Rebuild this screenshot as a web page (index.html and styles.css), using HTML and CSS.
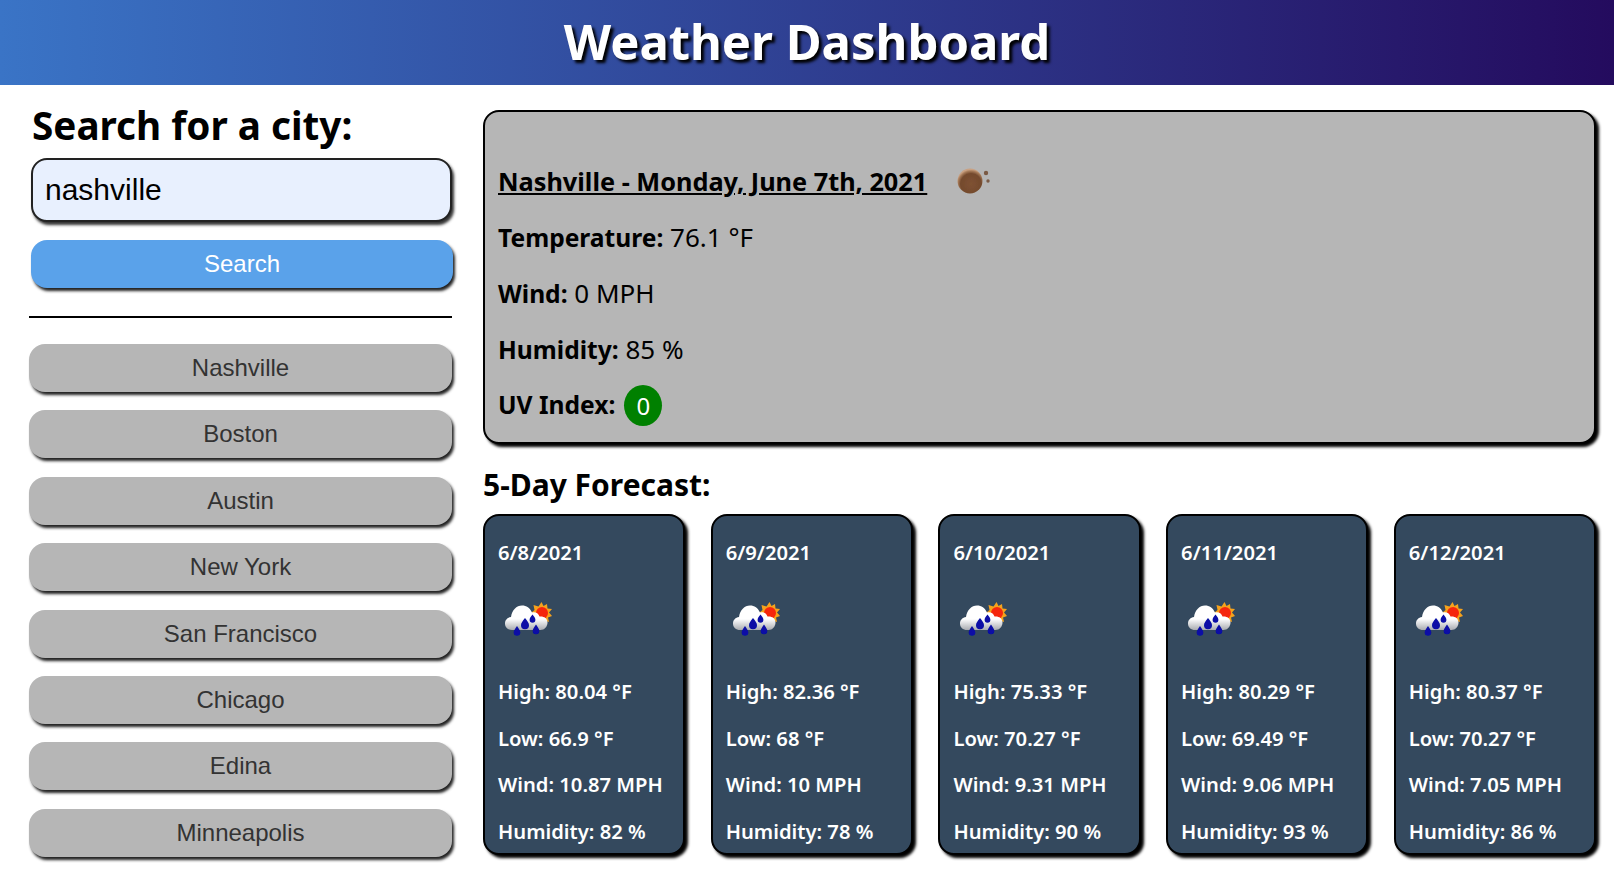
FILE: index.html
```html
<!DOCTYPE html>
<html lang="en">
<head>
    <meta charset="UTF-8">
    <meta name="viewport" content="width=device-width, initial-scale=1.0">
    <link rel="stylesheet" href="styles.css">
    <title>Weather Dashboard</title>
</head>
<body>
    <svg class="defs" width="0" height="0">
        <defs>
            <radialGradient id="ballFill" cx="54%" cy="62%" r="58%">
                <stop offset="0" stop-color="#7f5233"/>
                <stop offset="0.72" stop-color="#744a2d"/>
                <stop offset="0.9" stop-color="#a87c5a"/>
                <stop offset="1" stop-color="#c9a182"/>
            </radialGradient>
            <linearGradient id="cloudFill" x1="0" y1="0" x2="0" y2="1">
                <stop offset="0.55" stop-color="#ffffff"/>
                <stop offset="1" stop-color="#a9abb0"/>
            </linearGradient>
            <filter id="soften" x="-10%" y="-10%" width="120%" height="120%">
                <feGaussianBlur stdDeviation="0.35"/>
            </filter>
            <symbol id="rainIcon" viewBox="0 0 47 35">
                <g filter="url(#soften)">
                    <polygon points="36.500,0 38.500,4 42,2 42.500,6.500 47,7 44,10.500 47,14 43,15.500 44,20 39.500,18.500 36.500,22 33.500,18 28.500,19 29.500,14 26,11 29.500,8 28.500,3 33.500,4.500" fill="#f6a21c"/>
                    <circle cx="37" cy="11" r="6" fill="#f5280e"/>
                    <path d="M7 28c-4 0-7-2.500-7-6.500 0-3.500 2.500-6 6-6.500C7 8 11.500 3.500 17 3.500c4.500 0 8 2.500 10 7 3-1 6.500.5 7.500 4 4-.5 8 1.500 8 6 0 4-3 7.500-7 7.500z" fill="url(#cloudFill)"/>
                    <g fill="#0710a6">
                        <path d="M12 24c2 3 3.300 4.500 3.300 6.500a3.300 3.300 0 0 1-6.600 0c0-2 1.300-3.500 3.300-6.500z"/>
                        <path d="M20 16c2.300 3 4 5 4 7.200a4 4 0 0 1-8 0c0-2.200 1.700-4.200 4-7.200z"/>
                        <path d="M27.500 12.500c1.700 2 2.900 3.700 2.900 5.300a2.900 2.900 0 0 1-5.800 0c0-1.600 1.200-3.300 2.900-5.300z"/>
                        <path d="M31 22.500c2 3 3.300 4.500 3.300 6.500a3.300 3.300 0 0 1-6.600 0c0-2 1.300-3.500 3.300-6.500z"/>
                    </g>
                </g>
            </symbol>
        </defs>
    </svg>

    <header class="topbar">
        <h1>Weather Dashboard</h1>
    </header>

    <div class="layout">
        <aside class="sidebar">
            <h2 class="search-title">Search for a city:</h2>
            <input class="search-input" type="text" value="nashville">
            <button class="search-btn">Search</button>
            <hr class="divider">
            <div class="history">
                <button class="city-btn">Nashville</button>
                <button class="city-btn">Boston</button>
                <button class="city-btn">Austin</button>
                <button class="city-btn">New York</button>
                <button class="city-btn">San Francisco</button>
                <button class="city-btn">Chicago</button>
                <button class="city-btn">Edina</button>
                <button class="city-btn">Minneapolis</button>
            </div>
        </aside>

        <main class="content">
            <section class="current">
                <div class="current-head">
                    <span class="current-title">Nashville - Monday, June 7th, 2021</span>
                    <svg class="ball-icon" viewBox="0 0 36 28">
                        <g filter="url(#soften)">
                            <circle cx="15" cy="14" r="12.500" fill="url(#ballFill)"/>
                            <circle cx="31" cy="6" r="2.200" fill="#7a5a44"/>
                            <circle cx="33" cy="14" r="1.700" fill="#7a5a44"/>
                        </g>
                    </svg>
                </div>
                <p class="current-row"><b>Temperature:</b> 76.1 °F</p>
                <p class="current-row"><b>Wind:</b> 0 MPH</p>
                <p class="current-row"><b>Humidity:</b> 85 %</p>
                <p class="current-row uv-row"><b>UV Index:</b><span class="uv">0</span></p>
            </section>

            <h3 class="forecast-title">5-Day Forecast:</h3>
            <section class="forecast">
                <div class="card">
                    <p>6/8/2021</p>
                    <svg class="rain-icon"><use href="#rainIcon"/></svg>
                    <p>High: 80.04 °F</p>
                    <p>Low: 66.9 °F</p>
                    <p>Wind: 10.87 MPH</p>
                    <p>Humidity: 82 %</p>
                </div>
                <div class="card">
                    <p>6/9/2021</p>
                    <svg class="rain-icon"><use href="#rainIcon"/></svg>
                    <p>High: 82.36 °F</p>
                    <p>Low: 68 °F</p>
                    <p>Wind: 10 MPH</p>
                    <p>Humidity: 78 %</p>
                </div>
                <div class="card">
                    <p>6/10/2021</p>
                    <svg class="rain-icon"><use href="#rainIcon"/></svg>
                    <p>High: 75.33 °F</p>
                    <p>Low: 70.27 °F</p>
                    <p>Wind: 9.31 MPH</p>
                    <p>Humidity: 90 %</p>
                </div>
                <div class="card">
                    <p>6/11/2021</p>
                    <svg class="rain-icon"><use href="#rainIcon"/></svg>
                    <p>High: 80.29 °F</p>
                    <p>Low: 69.49 °F</p>
                    <p>Wind: 9.06 MPH</p>
                    <p>Humidity: 93 %</p>
                </div>
                <div class="card">
                    <p>6/12/2021</p>
                    <svg class="rain-icon"><use href="#rainIcon"/></svg>
                    <p>High: 80.37 °F</p>
                    <p>Low: 70.27 °F</p>
                    <p>Wind: 7.05 MPH</p>
                    <p>Humidity: 86 %</p>
                </div>
            </section>
        </main>
    </div>
</body>
</html>
```

FILE: styles.css
```css
* {
    box-sizing: border-box;
}

body {
    margin: 0;
    background-color: #ffffff;
    color: #000000;
    font-family: "Noto Sans", "Liberation Sans", sans-serif;
}

.defs {
    display: block;
}

.topbar {
    height: 85px;
    display: flex;
    align-items: center;
    justify-content: center;
    padding-bottom: 3px;
    background: linear-gradient(to right, #3a74c6, #240b5e);
}

.topbar h1 {
    margin: 0;
    color: #ffffff;
    font-size: 49px;
    font-weight: 700;
    text-shadow: 3px 3px 3px #000000;
}

.layout {
    display: flex;
    padding: 0 18px 30px 29px;
    gap: 30px;
}

.sidebar {
    width: 424px;
    flex-shrink: 0;
}

.search-title {
    margin: 18px 0 11px 3px;
    font-size: 38.700px;
    line-height: 44px;
    font-weight: 700;
}

.search-input {
    display: block;
    width: 421px;
    height: 64px;
    margin-left: 2px;
    padding: 0 12px;
    background-color: #e8f0fe;
    border: 2px solid #222222;
    border-radius: 16px;
    box-shadow: 2px 3px 3px #333333;
    font-family: "Liberation Sans", sans-serif;
    font-size: 30px;
    color: #000000;
}

.search-btn,
.city-btn {
    display: block;
    height: 48px;
    border: none;
    border-radius: 16px;
    box-shadow: 2px 3px 3px #222222;
    font-family: "Liberation Sans", sans-serif;
    font-size: 24px;
}

.search-btn {
    width: 422px;
    margin: 18px 0 0 2px;
    background-color: #5aa2ea;
    color: #ffffff;
}

.divider {
    margin: 28px 1px 26px 0;
    border: none;
    height: 2px;
    background-color: #000000;
}

.history {
    display: flex;
    flex-direction: column;
    gap: 18.400px;
}

.city-btn {
    width: 423px;
    background-color: #b6b6b6;
    color: #333333;
}

.content {
    flex: 1;
    min-width: 0;
    padding-top: 25px;
}

.current {
    height: 334px;
    padding: 52px 13px 0;
    background-color: #b6b6b6;
    border: 2px solid #000000;
    border-radius: 16px;
    box-shadow: 3px 3px 3px #000000;
    font-size: 26px;
}

.current-head {
    display: flex;
    align-items: center;
    height: 34px;
    font-size: 25.300px;
    font-weight: 700;
}

.current-title {
    text-decoration: underline;
}

.ball-icon {
    width: 36px;
    height: 28px;
    margin-left: 28px;
}

.current-row {
    margin: 22px 0 0;
    height: 34px;
    line-height: 34px;
}

.current-row b {
    font-size: 24.600px;
}

.uv-row {
    display: flex;
    align-items: center;
    gap: 9px;
}

.uv {
    width: 38px;
    height: 41px;
    line-height: 41px;
    flex-shrink: 0;
    border-radius: 50%;
    text-align: center;
    background-color: #008000;
    color: #ffffff;
    font-size: 24px;
}

.forecast-title {
    margin: 23px 0 11px;
    font-size: 30px;
    line-height: 36px;
    font-weight: 700;
}

.forecast {
    display: grid;
    grid-template-columns: repeat(5, 1fr);
    gap: 25.500px;
}

.card {
    height: 341px;
    padding: 23px 13px 0;
    background-color: #34495e;
    border: 2px solid #000000;
    border-radius: 16px;
    box-shadow: 3px 3px 3px #000000;
    color: #ffffff;
    font-size: 20.200px;
    font-weight: 600;
}

.card p {
    margin: 0 0 20.500px;
    line-height: 26px;
    white-space: nowrap;
}

.rain-icon {
    display: block;
    width: 47px;
    height: 35px;
    margin: 37px 0 41px 7px;
}
```
